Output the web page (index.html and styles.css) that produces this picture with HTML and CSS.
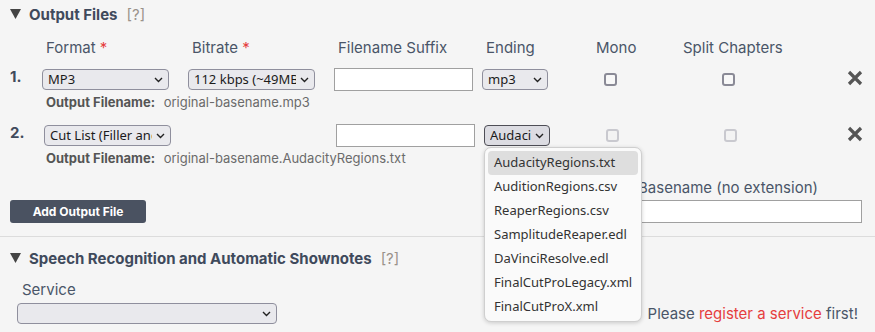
FILE: index.html
```html
<!DOCTYPE html>
<html>
<head>
    <meta charset="UTF-8">
    <title>Output Files</title>
    <link rel="stylesheet" href="styles.css">
</head>
<body>
<div class="panel">
    <section class="section">
        <h2 class="section-title">
            <svg class="caret" width="11" height="10" viewBox="0 0 11 10"><polygon points="0,0 11,0 5.5,10" fill="#444"/></svg>
            Output Files <span class="help">[?]</span>
        </h2>

        <div class="out-grid out-head">
            <span></span>
            <span class="col-label">Format <b class="req">*</b></span>
            <span class="col-label">Bitrate <b class="req">*</b></span>
            <span class="col-label">Filename Suffix</span>
            <span class="col-label">Ending</span>
            <span class="col-label">Mono</span>
            <span class="col-label">Split Chapters</span>
            <span></span>
        </div>

        <div class="out-file">
            <div class="out-grid out-row">
                <span class="num">1.</span>
                <span class="sel sel-wide"><select><option>MP3</option></select><svg class="chev" width="9" height="6" viewBox="0 0 9 6"><polyline points="1,1 4.5,4.5 8,1" fill="none" stroke="#222" stroke-width="1.4"/></svg></span>
                <span class="sel sel-wide"><select><option>112 kbps (~49MB)</option></select><svg class="chev" width="9" height="6" viewBox="0 0 9 6"><polyline points="1,1 4.5,4.5 8,1" fill="none" stroke="#222" stroke-width="1.4"/></svg></span>
                <input class="suffix" type="text">
                <span class="sel sel-small"><select><option>mp3</option></select><svg class="chev" width="9" height="6" viewBox="0 0 9 6"><polyline points="1,1 4.5,4.5 8,1" fill="none" stroke="#222" stroke-width="1.4"/></svg></span>
                <input class="check check-mono" type="checkbox">
                <input class="check check-split" type="checkbox">
                <svg class="remove" width="16" height="16" viewBox="0 0 16 16"><path d="M2 2L14 14M14 2L2 14" stroke="#555" stroke-width="3.2"/></svg>
            </div>
            <div class="out-name"><b>Output Filename:</b> original-basename.mp3</div>
        </div>

        <div class="out-file">
            <div class="out-grid out-row out-row-cut">
                <span class="num">2.</span>
                <span class="sel sel-wide"><select><option>Cut List (Filler and Silence)</option></select><svg class="chev" width="9" height="6" viewBox="0 0 9 6"><polyline points="1,1 4.5,4.5 8,1" fill="none" stroke="#222" stroke-width="1.4"/></svg></span>
                <span></span>
                <input class="suffix" type="text">
                <span class="sel sel-small open"><select><option>AudacityRegions.txt</option></select><svg class="chev" width="9" height="6" viewBox="0 0 9 6"><polyline points="1,1 4.5,4.5 8,1" fill="none" stroke="#222" stroke-width="1.4"/></svg></span>
                <input class="check check-mono" type="checkbox" disabled>
                <input class="check check-split" type="checkbox" disabled>
                <svg class="remove" width="16" height="16" viewBox="0 0 16 16"><path d="M2 2L14 14M14 2L2 14" stroke="#555" stroke-width="3.2"/></svg>
            </div>
            <div class="out-name"><b>Output Filename:</b> original-basename.AudacityRegions.txt</div>
        </div>

        <div class="out-foot">
            <button class="btn">Add Output File</button>
            <label class="basename">
                <span>Basename (no extension)</span>
                <input type="text">
            </label>
        </div>
    </section>

    <section class="section section-speech">
        <h2 class="section-title">
            <svg class="caret" width="11" height="10" viewBox="0 0 11 10"><polygon points="0,0 11,0 5.5,10" fill="#444"/></svg>
            Speech Recognition and Automatic Shownotes <span class="help">[?]</span>
        </h2>
        <div class="speech-row">
            <label class="service">
                <span>Service</span>
                <span class="sel sel-service"><select><option></option></select><svg class="chev" width="9" height="6" viewBox="0 0 9 6"><polyline points="1,1 4.5,4.5 8,1" fill="none" stroke="#222" stroke-width="1.4"/></svg></span>
            </label>
            <p class="notice">Please <a href="#">register a service</a> first!</p>
        </div>
    </section>
</div>

<!-- open list of the second "Ending" select -->
<ul class="popup">
    <li class="active">AudacityRegions.txt</li>
    <li>AuditionRegions.csv</li>
    <li>ReaperRegions.csv</li>
    <li>SamplitudeReaper.edl</li>
    <li>DaVinciResolve.edl</li>
    <li>FinalCutProLegacy.xml</li>
    <li>FinalCutProX.xml</li>
</ul>
</body>
</html>
```

FILE: styles.css
```css
* {
    margin: 0;
    padding: 0;
    box-sizing: border-box;
}

body {
    position: relative;
    background: #f5f5f5;
    font-family: Inter, "Liberation Sans", sans-serif;
    font-size: 15px;
    color: #4a5568;
    overflow: hidden;
}

ul, li {
    list-style: none;
}

.section {
    padding: 4px 12px 13px 10px;
    border-bottom: 1px solid #dcdcdc;
}

.section-title {
    display: flex;
    align-items: center;
    height: 20px;
    font-size: 15px;
    font-weight: 700;
    color: #3f4a5c;
}

.caret {
    margin-right: 8px;
}

.help {
    margin-left: 9px;
    font-weight: 400;
    color: #9a928b;
}

/*--columns of the output file list--*/
.out-grid {
    display: grid;
    grid-template-columns: 32px 146px 146px 148px 110px 87px 157px 1fr;
    align-items: center;
}

.out-head {
    margin-top: 13px;
    height: 20px;
}

.col-label {
    padding-left: 4px;
}

.req {
    color: #e53e3e;
    font-weight: 400;
}

.out-file {
    margin-top: 10px;
}

.out-file + .out-file {
    margin-top: 13px;
}

.out-row {
    height: 24px;
}

.out-row-cut {
    padding-left: 2px;
}

.out-row-cut .num {
    margin-left: -2px;
}

.num {
    font-weight: 700;
    color: #3f4a5c;
    margin-top: -6px;
}

.out-name {
    margin-top: 3px;
    padding-left: 36px;
    height: 16px;
    line-height: 16px;
    font-size: 13px;
    color: #6b6b6b;
}

.out-name b {
    color: #555;
    margin-right: 5px;
}

/*--select boxes, firefox look--*/
.sel {
    position: relative;
    display: inline-block;
    height: 21px;
}

.sel select {
    -webkit-appearance: none;
    appearance: none;
    width: 100%;
    height: 100%;
    padding: 0 18px 0 5px;
    font-family: "Noto Sans", "Open Sans", sans-serif;
    font-size: 13px;
    color: #1b1b1b;
    background: #e9e9ed;
    border: 1px solid #8f8f9d;
    border-radius: 4px;
    outline: none;
}

.sel .chev {
    position: absolute;
    right: 6px;
    top: 8px;
    pointer-events: none;
}

.sel-wide {
    width: 127px;
}

.sel-small {
    width: 66px;
}

.sel.open select {
    background: #dcdce2;
    border-color: #4e4e56;
}

.sel-service {
    width: 260px;
}

.suffix {
    width: 139px;
    height: 23px;
    background: #fff;
    border: 1px solid #a0a0a0;
}

.check {
    -webkit-appearance: none;
    appearance: none;
    width: 13px;
    height: 13px;
    border: 2px solid #8a8a96;
    border-radius: 3px;
    background: #f8f8f8;
}

.check:disabled {
    border-color: #c9c9cf;
    background: #f3f3f3;
}

.check-mono {
    margin-left: 12px;
}

.check-split {
    margin-left: 43px;
}

.remove {
    justify-self: end;
    margin-top: -3px;
}

/*--bottom row: add button + basename--*/
.out-foot {
    display: flex;
    justify-content: space-between;
    align-items: flex-end;
    margin-top: 13px;
}

.btn {
    width: 136px;
    height: 23px;
    font-family: Inter, "Liberation Sans", sans-serif;
    font-size: 12px;
    font-weight: 700;
    color: #fff;
    background: #4a5261;
    border: none;
    border-radius: 3px;
}

.basename {
    display: flex;
    flex-direction: column;
    width: 228px;
    margin-right: 1px;
}

.basename span {
    height: 18px;
    line-height: 18px;
    padding-left: 4px;
}

.basename input {
    margin-top: 3px;
    height: 23px;
    background: #fff;
    border: 1px solid #a0a0a0;
}

/*--speech recognition--*/
.section-speech {
    padding-top: 11px;
    border-bottom: none;
}

.speech-row {
    display: flex;
    justify-content: space-between;
    align-items: flex-end;
    margin-top: 13px;
}

.service {
    display: flex;
    flex-direction: column;
    padding-left: 7px;
}

.service > span:first-child {
    height: 18px;
    line-height: 18px;
    padding-left: 5px;
    margin-bottom: 4px;
}

.notice {
    margin-right: 5px;
    line-height: 20px;
    color: #4a5568;
}

.notice a {
    color: #e53e3e;
    text-decoration: none;
}

/*--open dropdown list--*/
.popup {
    position: absolute;
    left: 484px;
    top: 147px;
    width: 158px;
    height: 175px;
    padding: 3px;
    background: #fafafa;
    border: 1px solid #cfcfcf;
    border-radius: 7px;
    box-shadow: 0 1px 4px rgba(0, 0, 0, .18);
    font-family: "Noto Sans", "Open Sans", sans-serif;
    font-size: 13px;
    color: #333;
}

.popup li {
    height: 24px;
    line-height: 23px;
    padding-left: 6px;
    border-radius: 4px;
}

.popup li.active {
    background: #dedede;
}
```
